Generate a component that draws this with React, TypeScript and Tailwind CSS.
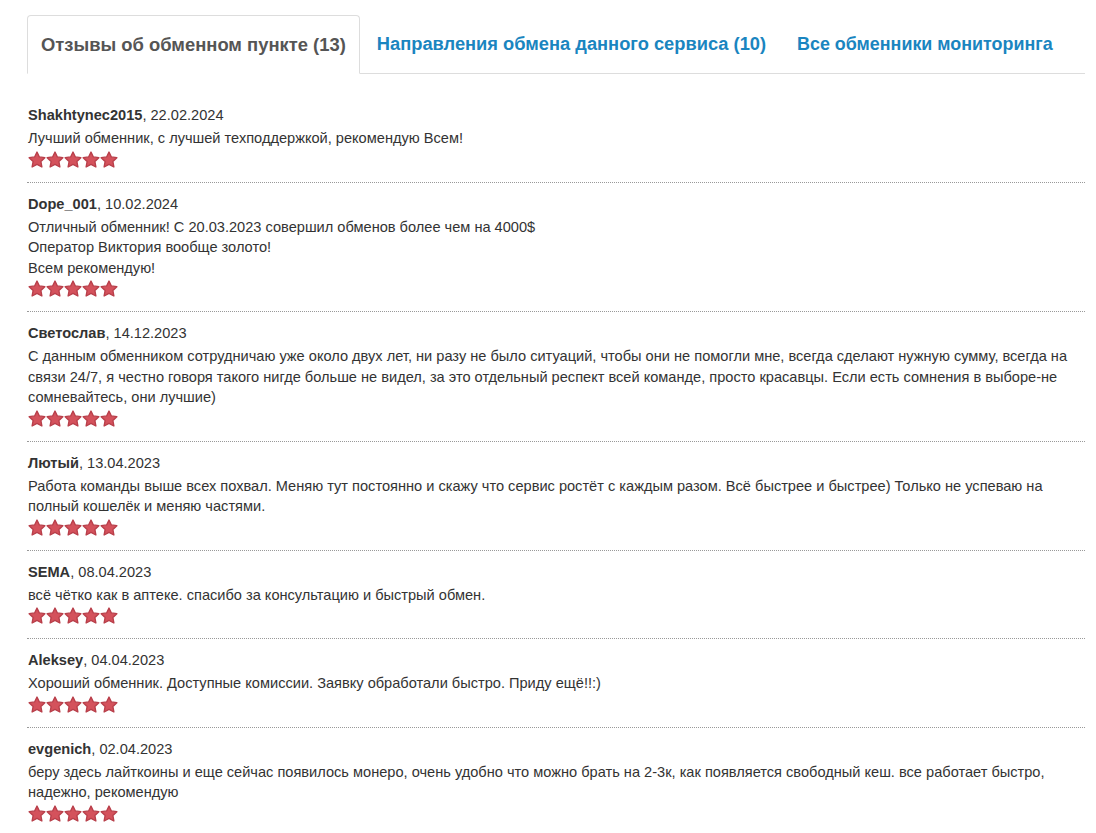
const reviews = [
  {
    name: 'Shakhtynec2015',
    date: '22.02.2024',
    lines: ['Лучший обменник, с лучшей техподдержкой, рекомендую Всем!'],
  },
  {
    name: 'Dope_001',
    date: '10.02.2024',
    lines: [
      'Отличный обменник! С 20.03.2023 совершил обменов более чем на 4000$',
      'Оператор Виктория вообще золото!',
      'Всем рекомендую!',
    ],
  },
  {
    name: 'Светослав',
    date: '14.12.2023',
    lines: [
      'С данным обменником сотрудничаю уже около двух лет, ни разу не было ситуаций, чтобы они не помогли мне, всегда сделают нужную сумму, всегда на связи 24/7, я честно говоря такого нигде больше не видел, за это отдельный респект всей команде, просто красавцы. Если есть сомнения в выборе-не сомневайтесь, они лучшие)',
    ],
  },
  {
    name: 'Лютый',
    date: '13.04.2023',
    lines: [
      'Работа команды выше всех похвал. Меняю тут постоянно и скажу что сервис ростёт с каждым разом. Всё быстрее и быстрее) Только не успеваю на полный кошелёк и меняю частями.',
    ],
  },
  {
    name: 'SEMA',
    date: '08.04.2023',
    lines: ['всё чётко как в аптеке. спасибо за консультацию и быстрый обмен.'],
  },
  {
    name: 'Aleksey',
    date: '04.04.2023',
    lines: ['Хороший обменник. Доступные комиссии. Заявку обработали быстро. Приду ещё!!:)'],
  },
  {
    name: 'evgenich',
    date: '02.04.2023',
    lines: [
      'беру здесь лайткоины и еще сейчас появилось монеро, очень удобно что можно брать на 2-3к, как появляется свободный кеш. все работает быстро, надежно, рекомендую',
    ],
  },
]

const Star = () => (
  <svg width="18" height="18" viewBox="0 0 24 24">
    <path
      d="M12 1.4l3.2 6.5 7.3 1-5.3 5.1 1.3 7.3L12 17.9l-6.5 3.4 1.3-7.3-5.3-5.1 7.3-1z"
      fill="#d4525c"
      stroke="#b83f4a"
      strokeWidth="1.8"
      strokeLinejoin="round"
    />
  </svg>
)

const Stars = () => (
  <div className="mt-[2px] flex h-[18px] items-center">
    {[0, 1, 2, 3, 4].map((i) => (
      <Star key={i} />
    ))}
  </div>
)

export default function App() {
  return (
    <div className="min-h-screen bg-white pl-[27px] pr-[11px] pt-[15px] font-['Liberation_Sans',Arial,sans-serif] text-[14.6px] text-[#333]">
      {/* Tabs */}
      <div className="flex border-b border-[#ddd]">
        <div className="-mb-px flex h-[59px] items-center rounded-t-[4px] border border-[#ddd] border-b-white bg-white pl-[13px] pr-[13px] text-[18.4px] font-bold text-[#555]">
          Отзывы об обменном пункте (13)
        </div>
        <div className="flex h-[58px] items-center pl-[17px] pr-[16px] text-[18.3px] font-bold text-[#1a85c0]">
          Направления обмена данного сервиса (10)
        </div>
        <div className="flex h-[58px] items-center pl-[15px] text-[17.9px] font-bold text-[#1a85c0]">
          Все обменники мониторинга
        </div>
      </div>

      {/* Reviews */}
      <div className="mt-[20px]">
        {reviews.map((r, idx) => (
          <div
            key={r.name}
            className={
              idx === reviews.length - 1
                ? 'pl-px pt-[11px] pb-[13px]'
                : 'border-b border-dotted border-[#999] pl-px pt-[11px] pb-[13px]'
            }
          >
            <div className="leading-[21px]">
              <b>{r.name}</b>, {r.date}
            </div>
            <div className="mt-[2px] leading-[20.5px]">
              {r.lines.map((l, i) => (
                <div key={i}>{l}</div>
              ))}
            </div>
            <Stars />
          </div>
        ))}
      </div>
    </div>
  )
}
